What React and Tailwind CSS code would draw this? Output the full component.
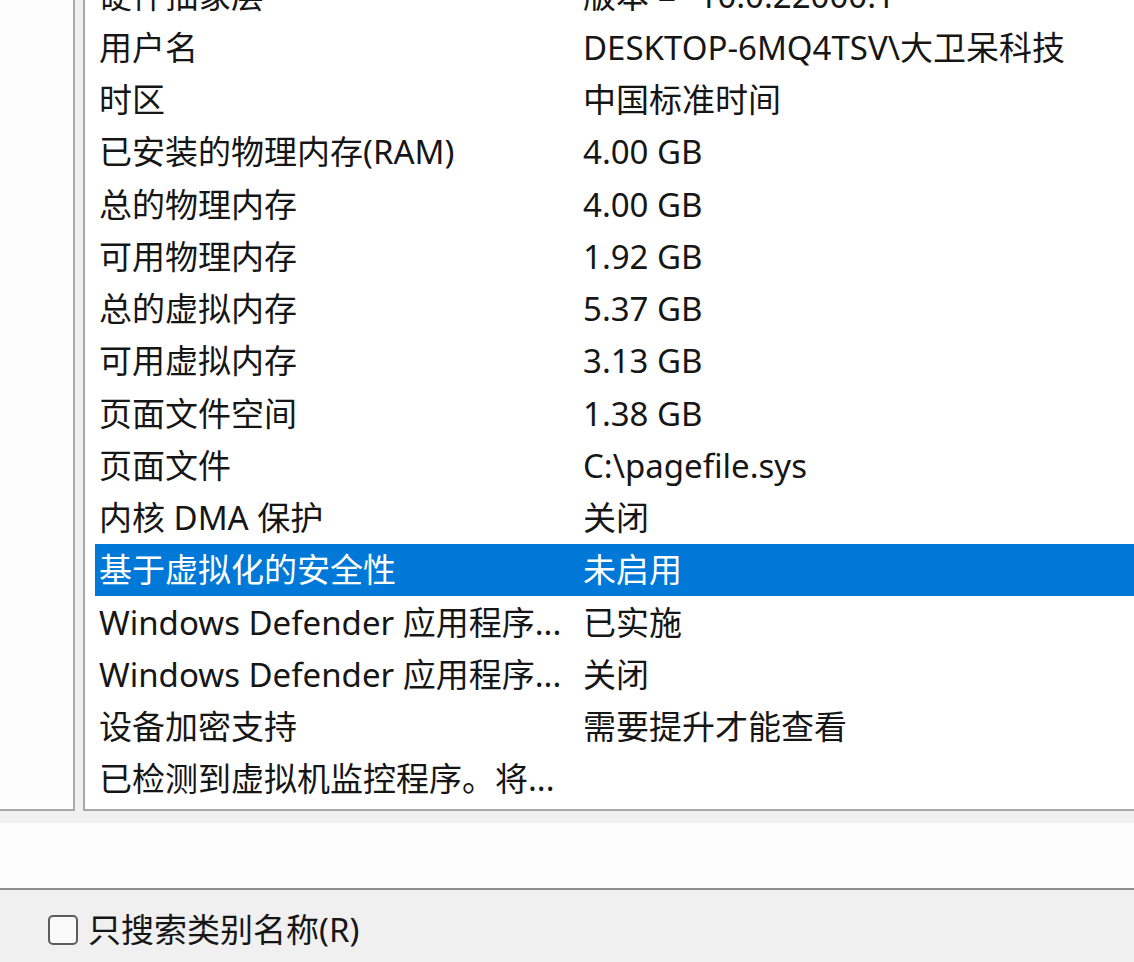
import React from 'react';

const rows = [
  ['硬件抽象层', '版本 = "10.0.22000.1"'],
  ['用户名', 'DESKTOP-6MQ4TSV\\大卫呆科技'],
  ['时区', '中国标准时间'],
  ['已安装的物理内存(RAM)', '4.00 GB'],
  ['总的物理内存', '4.00 GB'],
  ['可用物理内存', '1.92 GB'],
  ['总的虚拟内存', '5.37 GB'],
  ['可用虚拟内存', '3.13 GB'],
  ['页面文件空间', '1.38 GB'],
  ['页面文件', 'C:\\pagefile.sys'],
  ['内核 DMA 保护', '关闭'],
  ['基于虚拟化的安全性', '未启用', true],
  ['Windows Defender 应用程序...', '已实施'],
  ['Windows Defender 应用程序...', '关闭'],
  ['设备加密支持', '需要提升才能查看'],
  ['已检测到虚拟机监控程序。将...', ''],
];

export default function App() {
  return (
    <div className="w-[1134px] h-[962px] overflow-hidden bg-[#f0f0f0] flex flex-col font-['Noto_Sans','Noto_Sans_CJK_SC',sans-serif] text-[33px] text-[#161616]">
      {/* Top panes */}
      <div className="flex h-[811px] shrink-0">
        <div className="w-[75px] bg-[#fcfcfc] border-r-2 border-b-2 border-[#a8a8a8]" />
        <div className="w-[8px]" />
        <div className="flex-1 bg-white border-l-2 border-b-2 border-[#a8a8a8] overflow-hidden">
          <div className="mt-[-31px] ml-[10px]">
            {rows.map(([label, value, selected], i) => (
              <div
                key={i}
                className={`flex items-center h-[52.25px] whitespace-nowrap ${
                  selected ? 'bg-[#0078d7] text-white' : ''
                }`}
              >
                <div className="w-[488px] pl-[4px] leading-none">{label}</div>
                <div className="leading-none">{value}</div>
              </div>
            ))}
          </div>
        </div>
      </div>

      {/* Search strip */}
      <div className="h-[12px] shrink-0" />
      <div className="h-[67px] shrink-0 bg-[#fcfcfc] border-b-2 border-[#8c8c8c]" />

      {/* Checkbox */}
      <div className="flex items-center pl-[48px] pt-[23px]">
        <div className="w-[30px] h-[30px] rounded-[5px] border-2 border-[#5c5c5c] bg-[#fafafa]" />
        <span className="ml-[10px] leading-none">只搜索类别名称(R)</span>
      </div>
    </div>
  );
}
